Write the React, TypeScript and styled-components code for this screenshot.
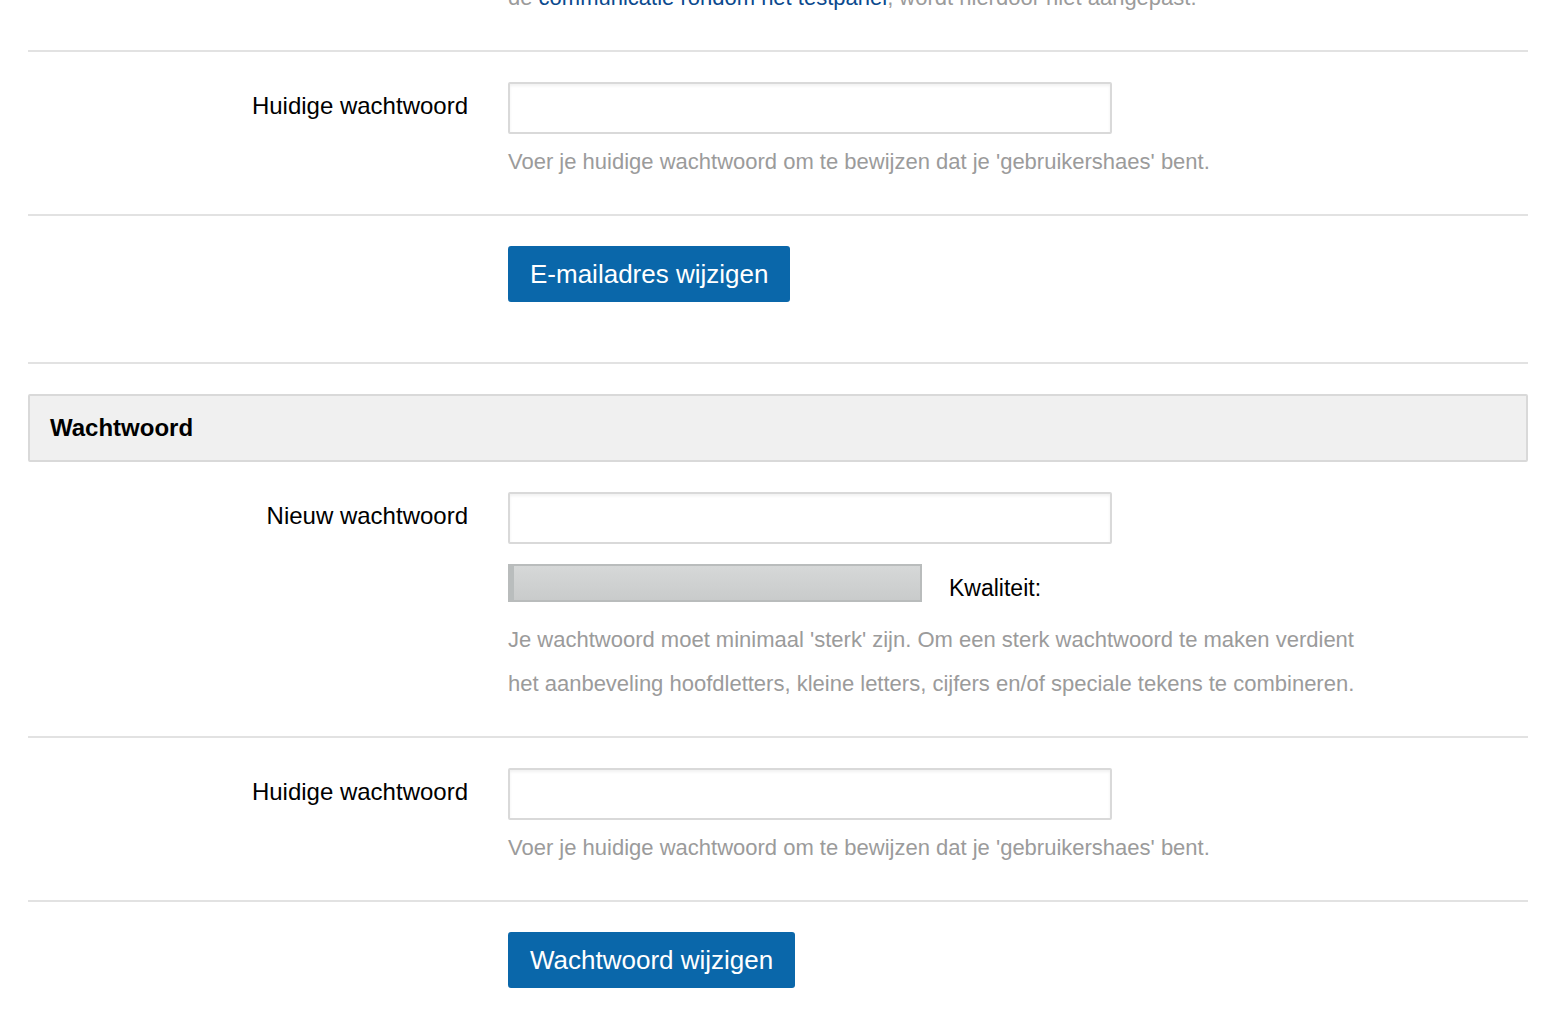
import React from "react";
import styled, { createGlobalStyle } from "styled-components";

const GlobalStyle = createGlobalStyle`
  html, body {
    margin: 0;
    padding: 0;
    background: #ffffff;
    font-family: "Liberation Sans", Arial, Helvetica, sans-serif;
    color: #000;
    overflow: hidden;
  }
`;

const Page = styled.div`
  padding: 0 38px 0 28px;
  width: 1500px;
`;

const Row = styled.div<{ $last?: boolean; $bottomSpace?: number }>`
  display: grid;
  grid-template-columns: 440px 1fr;
  column-gap: 40px;
  padding: 30px 0 ${(p) => p.$bottomSpace ?? 30}px;
  border-bottom: ${(p) => (p.$last ? "none" : "2px solid #e2e2e2")};
`;

const TopRow = styled(Row)`
  padding-top: 0;
  margin-top: -24px;
`;

const Label = styled.label`
  grid-column: 1;
  text-align: right;
  font-size: 24px;
  line-height: 48px;
  color: #000;
`;

const Field = styled.div`
  grid-column: 2;
  display: flex;
  flex-direction: column;
  align-items: flex-start;
`;

const Input = styled.input`
  box-sizing: border-box;
  width: 604px;
  height: 52px;
  border: 2px solid #d9d9d9;
  border-radius: 2px;
  box-shadow: inset 0 2px 3px rgba(0, 0, 0, 0.06);
  background: #fff;
  margin: 0;
  font-size: 22px;
  font-family: inherit;
  outline: none;
`;

const Hint = styled.p<{ $gap?: number }>`
  margin: ${(p) => p.$gap ?? 6}px 0 0;
  font-size: 22px;
  line-height: 44px;
  color: #9b9b9b;
  max-width: 860px;
`;

const Link = styled.a`
  color: #0b4a8e;
  text-decoration: none;
`;

const Button = styled.button`
  height: 56px;
  padding: 0 22px;
  border: none;
  border-radius: 3px;
  background: #0a67aa;
  color: #fff;
  font-family: inherit;
  font-size: 26px;
  cursor: pointer;
`;

const SectionHeader = styled.h2`
  box-sizing: border-box;
  margin: 30px 0 0;
  height: 68px;
  display: flex;
  align-items: center;
  padding: 0 20px;
  background: #f0f0f0;
  border: 2px solid #d9d9d9;
  border-radius: 2px;
  font-size: 24px;
  font-weight: bold;
  color: #000;
`;

const StrengthRow = styled.div`
  display: flex;
  align-items: center;
  gap: 27px;
  margin-top: 20px;
`;

const Meter = styled.div`
  box-sizing: border-box;
  width: 414px;
  height: 38px;
  border: 2px solid #b9bcbc;
  background: linear-gradient(#d6d8d8, #c9cbcb);
  display: flex;
`;

const MeterValue = styled.div`
  background: #b9bdbd;
  height: 100%;
`;

const Quality = styled.span`
  font-size: 23px;
  color: #000;
  margin-top: 10px;
`;

export default function App() {
  const strength = 4;
  return (
    <>
      <GlobalStyle />
      <Page>
        <TopRow>
          <Field>
            <Hint $gap={0}>
              de <Link href="#">communicatie rondom het testpanel</Link>, wordt hierdoor niet aangepast.
            </Hint>
          </Field>
        </TopRow>

        <Row>
          <Label>Huidige wachtwoord</Label>
          <Field>
            <Input type="password" />
            <Hint>Voer je huidige wachtwoord om te bewijzen dat je 'gebruikershaes' bent.</Hint>
          </Field>
        </Row>

        <Row $bottomSpace={60}>
          <Field>
            <Button>E-mailadres wijzigen</Button>
          </Field>
        </Row>

        <SectionHeader>Wachtwoord</SectionHeader>

        <Row>
          <Label>Nieuw wachtwoord</Label>
          <Field>
            <Input type="password" />
            <StrengthRow>
              <Meter>
                <MeterValue style={{ width: `${strength}px` }} />
              </Meter>
              <Quality>Kwaliteit:</Quality>
            </StrengthRow>
            <Hint $gap={16}>
              Je wachtwoord moet minimaal 'sterk' zijn. Om een sterk wachtwoord te maken verdient het aanbeveling hoofdletters, kleine letters, cijfers en/of speciale tekens te combineren.
            </Hint>
          </Field>
        </Row>

        <Row>
          <Label>Huidige wachtwoord</Label>
          <Field>
            <Input type="password" />
            <Hint>Voer je huidige wachtwoord om te bewijzen dat je 'gebruikershaes' bent.</Hint>
          </Field>
        </Row>

        <Row $last>
          <Field>
            <Button>Wachtwoord wijzigen</Button>
          </Field>
        </Row>
      </Page>
    </>
  );
}
